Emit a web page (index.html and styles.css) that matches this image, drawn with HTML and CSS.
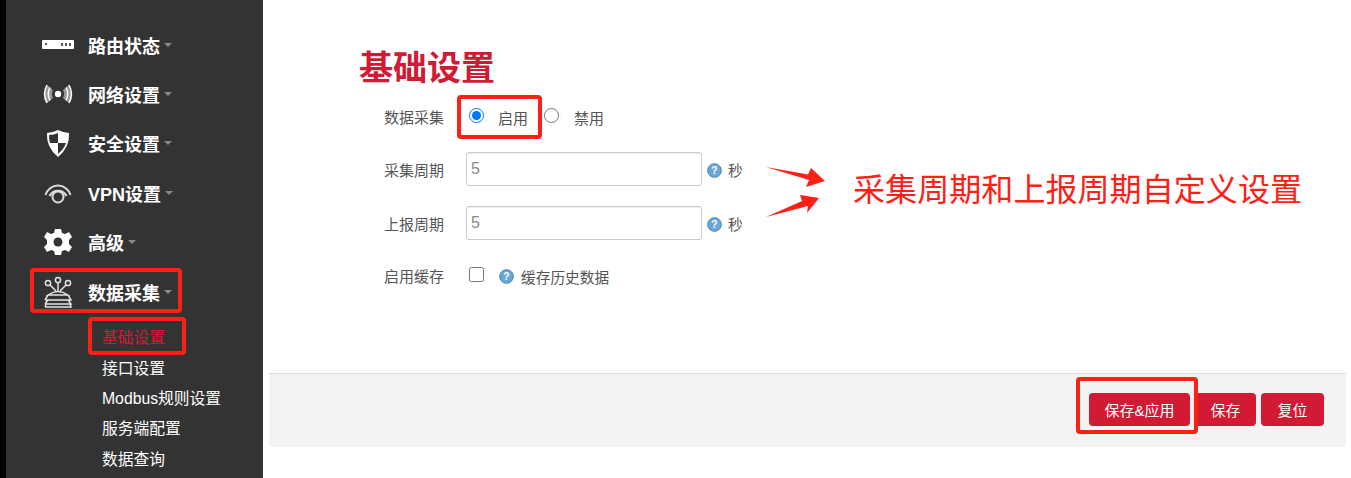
FILE: index.html
```html
<!DOCTYPE html>
<html lang="zh-CN">
  <head>
    <meta charset="UTF-8" />
    <title>基础设置</title>
    <link rel="stylesheet" href="styles.css">
  </head>
  <body>
    <div class="sidebar">
      <ul class="menu">
        <li class="menu-item">
          <svg class="menu-icon" viewBox="0 0 32 32"><rect x="0" y="11" width="32" height="9" rx="1" fill="#fff"/><g fill="#555"><rect x="3" y="14" width="2" height="2"/><rect x="19" y="14" width="2" height="3"/><rect x="23" y="14" width="2" height="3"/><rect x="27" y="14" width="2" height="3"/></g></svg>
          <span class="menu-name">路由状态</span><i class="caret"></i>
        </li>
        <li class="menu-item">
          <svg class="menu-icon" viewBox="0 0 32 32"><circle cx="16" cy="16" r="3.2" fill="#fff"/><path d="M5 7Q0 16 5 25L11 20Q9 16 11 12zM27 7Q32 16 27 25L21 20Q23 16 21 12z" fill="#999"/><g fill="none" stroke="#fff" stroke-width="1.5"><path d="M5 7Q0 16 5 25M8 9.500Q4.500 16 8 22.500M27 7Q32 16 27 25M24 9.500Q27.500 16 24 22.500"/></g></svg>
          <span class="menu-name">网络设置</span><i class="caret"></i>
        </li>
        <li class="menu-item">
          <svg class="menu-icon" viewBox="0 0 32 32"><path d="M16 3q6 3 11 3q1 14-11 24Q4 20 5 6q5 0 11-3z" fill="#fff"/><path d="M16 6v10H8q-1-4-1-8q5 0 9-2zM16 16h8q-2 6-8 11z" fill="#333"/></svg>
          <span class="menu-name">安全设置</span><i class="caret"></i>
        </li>
        <li class="menu-item">
          <svg class="menu-icon" viewBox="0 0 32 32" fill="none" stroke="#ddd" stroke-width="2"><circle cx="16" cy="20" r="5.500"/><path d="M7.500 19A9.500 9.500 0 0 1 24.500 19M3.500 18A13 13 0 0 1 28.500 18"/></svg>
          <span class="menu-name">VPN设置</span><i class="caret"></i>
        </li>
        <li class="menu-item">
          <svg class="menu-icon" viewBox="0 0 32 32"><path d="M13 3h6l1 4 3 1 4-2 3 5-3 3v4l3 3-3 5-4-2-3 1-1 4h-6l-1-4-3-1-4 2-3-5 3-3v-4l-3-3 3-5 4 2 3-1z" fill="#fff"/><circle cx="16" cy="16" r="4.500" fill="#333"/></svg>
          <span class="menu-name">高级</span><i class="caret"></i>
        </li>
        <li class="menu-item">
          <svg class="menu-icon" viewBox="0 0 32 32" fill="none" stroke="#e4e4e4" stroke-width="1.500"><circle cx="16" cy="4" r="2.600"/><circle cx="6" cy="7" r="2.600"/><circle cx="26" cy="7" r="2.600"/><path d="M16 7v8M8 9l6 6M24 9l-6 6M6 19q10-7 20 0zM3 24h26l-3-5M3 24l3-5M3 28h26l-3-4M3 28l3-4M3 31h26l-1-3M3 31l1-3"/></svg>
          <span class="menu-name">数据采集</span><i class="caret"></i>
        </li>
      </ul>
      <ul class="submenu">
        <li class="active">基础设置</li>
        <li>接口设置</li>
        <li>Modbus规则设置</li>
        <li>服务端配置</li>
        <li>数据查询</li>
      </ul>
    </div>

    <div class="main">
      <h2 class="title">基础设置</h2>
      <div class="form">
        <div class="form-row row-radio">
          <label class="form-label">数据采集</label>
          <span class="check-wrap"><input type="radio" name="enable" checked></span>
          <span class="radio-text">启用</span>
          <span class="check-wrap second"><input type="radio" name="enable"></span>
          <span class="radio-text last">禁用</span>
        </div>
        <div class="form-row row-input">
          <label class="form-label">采集周期</label>
          <input class="text-input" type="text" value="5">
          <svg class="help" viewBox="0 0 16 16"><circle cx="8" cy="8" r="7.300" fill="#6aa6d8" stroke="#4180b4"/><text x="8" y="12" text-anchor="middle">?</text></svg>
          <span class="unit">秒</span>
        </div>
        <div class="form-row row-input">
          <label class="form-label">上报周期</label>
          <input class="text-input" type="text" value="5">
          <svg class="help" viewBox="0 0 16 16"><circle cx="8" cy="8" r="7.300" fill="#6aa6d8" stroke="#4180b4"/><text x="8" y="12" text-anchor="middle">?</text></svg>
          <span class="unit">秒</span>
        </div>
        <div class="form-row row-check">
          <label class="form-label">启用缓存</label>
          <span class="check-wrap"><input type="checkbox"></span>
          <svg class="help help-check" viewBox="0 0 16 16"><circle cx="8" cy="8" r="7.300" fill="#6aa6d8" stroke="#4180b4"/><text x="8" y="12" text-anchor="middle">?</text></svg>
          <span class="unit">缓存历史数据</span>
        </div>
      </div>
      <div class="actions">
        <button class="btn btn-apply">保存&amp;应用</button>
        <button class="btn btn-save">保存</button>
        <button class="btn btn-reset">复位</button>
      </div>
    </div>

    <!-- annotations drawn over the screenshot -->
    <div class="mark mark-radio"></div>
    <div class="mark mark-menu"></div>
    <div class="mark mark-sub"></div>
    <div class="mark mark-btn"></div>
    <svg class="arrows" viewBox="0 0 70 65"><path d="M6 7L48 14.500 51 8 65 21 46 27 49 20zM6 57L42 41 40 35 59 38 47 53 48 46z" fill="#ff2015"/></svg>
    <div class="note">采集周期和上报周期自定义设置</div>
  </body>
</html>
```

FILE: styles.css
```css
* {
  box-sizing: border-box;
}

html, body {
  height: 100%;
}

body {
  display: flex;
  margin: 0;
  overflow: hidden;
  background: #fff;
  color: #555;
  font-family: "Liberation Sans", "Noto Sans CJK SC", sans-serif;
  font-size: 14px;
}

/* sidebar */
.sidebar {
  width: 263px;
  height: 478px;
  flex-shrink: 0;
  padding-top: 20px;
  background: #333;
  border-left: 6px solid #000;
}

.menu, .submenu {
  margin: 0;
  padding: 0;
  list-style: none;
}

.menu-item {
  display: flex;
  align-items: center;
  height: 49.4px;
  padding-left: 36px;
  color: #fff;
  font-size: 18px;
  font-weight: bold;
}

.menu-icon {
  width: 32px;
  height: 32px;
  flex-shrink: 0;
}

.menu-name {
  margin-left: 14px;
}

.caret {
  width: 0;
  height: 0;
  margin-left: 4px;
  border-top: 4px solid #888;
  border-left: 4px solid transparent;
  border-right: 4px solid transparent;
}

.submenu {
  padding-top: 7px;
  padding-left: 96px;
}

.submenu li {
  height: 30.3px;
  line-height: 30px;
  color: #fff;
  font-size: 15.75px;
}

.submenu .active {
  color: #d31a35;
}

/* main area */
.main {
  flex: 1;
  min-width: 0;
  padding-left: 6px;
  padding-right: 5px;
}

.title {
  margin: 46px 0 0 90px;
  color: #d31a35;
  font-size: 34px;
  line-height: 44px;
  font-weight: bold;
}

.form {
  height: 274px;
  padding-left: 115px;
}

.form-row {
  display: flex;
  align-items: center;
}

.form-label {
  width: 82px;
  font-size: 15px;
}

.row-radio {
  height: 34px;
  margin-top: 9px;
}

.row-input {
  height: 34px;
  margin-top: 19px;
}

.row-input + .row-input {
  margin-top: 20px;
}

.row-check {
  height: 24px;
  margin-top: 23px;
}

.check-wrap {
  display: flex;
  justify-content: center;
  width: 22px;
  height: 15px;
  background: #fbfbfb;
}

.check-wrap input {
  width: 15px;
  height: 15px;
  margin: 0 0 0 -2px;
}

.row-radio .check-wrap {
  margin-top: -2px;
}

.row-check .check-wrap {
  margin-top: -1px;
}

.check-wrap.second {
  margin-left: 12px;
}

.check-wrap.second input {
  margin-left: 0;
}

.radio-text {
  margin-top: 3px;
  margin-left: 10px;
  font-size: 15px;
}

.radio-text.last {
  margin-left: 12px;
}

.text-input {
  width: 236px;
  height: 34px;
  padding: 0 4px;
  border: 1px solid #ccc;
  border-radius: 3px;
  color: #888;
  font-family: inherit;
  font-size: 16px;
  box-shadow: inset 0 1px 1px rgba(0, 0, 0, 0.08);
}

.help {
  width: 15px;
  height: 15px;
  margin-top: 2px;
  margin-left: 5px;
}

.help text {
  fill: #fff;
  font-size: 11px;
  font-weight: bold;
}

.help-check {
  margin-left: 11px;
  margin-top: 3px;
}

.unit {
  margin-left: 6px;
  font-size: 14.7px;
}

.row-check .unit {
  margin-top: 3px;
  margin-left: 7px;
}

.actions {
  display: flex;
  justify-content: flex-end;
  align-items: flex-start;
  gap: 5px;
  height: 74px;
  padding: 19px 22px 0 0;
  background: #f3f3f3;
  border-top: 1px solid #ddd;
  border-radius: 0 0 3px 3px;
}

.btn {
  height: 33px;
  padding: 0;
  border: none;
  border-radius: 4px;
  background: #d31a35;
  color: #fff;
  font-family: inherit;
  font-size: 15px;
}

.btn-apply {
  width: 101px;
}

.btn-save {
  width: 61px;
}

.btn-reset {
  width: 63px;
}

/* annotations */
.mark {
  position: absolute;
  border: 4px solid #ff2015;
  border-radius: 4px;
}

.mark-radio {
  left: 457px;
  top: 95px;
  width: 85px;
  height: 44px;
}

.mark-menu {
  left: 30px;
  top: 268px;
  width: 152px;
  height: 45px;
}

.mark-sub {
  left: 88px;
  top: 317px;
  width: 98px;
  height: 38px;
}

.mark-btn {
  left: 1076px;
  top: 377px;
  width: 122px;
  height: 57px;
}

.arrows {
  position: absolute;
  left: 760px;
  top: 160px;
  width: 70px;
  height: 65px;
}

.note {
  position: absolute;
  left: 853px;
  top: 170px;
  color: #ff2015;
  font-size: 32.1px;
  line-height: 40px;
}
```
